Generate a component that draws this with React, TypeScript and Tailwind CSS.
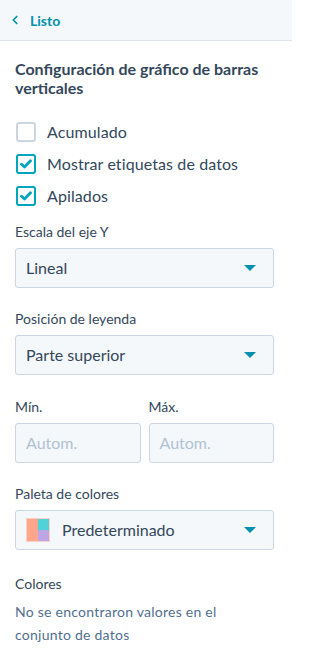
import { ChevronLeft } from "lucide-react";

function Caret() {
  return (
    <svg width="12" height="6" viewBox="0 0 12 6" className="shrink-0">
      <path d="M0 0 H12 L6 6 Z" fill="#0091ae" />
    </svg>
  );
}

function Checkbox({ checked, label }: { checked: boolean; label: string }) {
  return (
    <label className="flex items-center gap-[11px] h-[32px]">
      <span
        className={
          checked
            ? "flex items-center justify-center w-[20px] h-[20px] rounded-[3px] border-2 border-[#00a4bd] bg-white"
            : "flex items-center justify-center w-[20px] h-[20px] rounded-[3px] border-2 border-[#cbd6e2] bg-white"
        }
      >
        {checked && (
          <svg width="12" height="10" viewBox="0 0 12 10">
            <path d="M1.5 5.2 L4.5 8 L10.5 1.8" stroke="#00a4bd" strokeWidth="2.8" fill="none" strokeLinecap="round" strokeLinejoin="round" />
          </svg>
        )}
      </span>
      <span className="text-[16px] tracking-[0.1px] text-[#33475b]">{label}</span>
    </label>
  );
}

function Select({ children }: { children: React.ReactNode }) {
  return (
    <div className="flex items-center justify-between h-[40px] px-[10px] pr-[17px] rounded-[3px] border border-[#cbd6e2] bg-[#f5f8fa] text-[16px] text-[#33475b]">
      <div className="flex items-center">{children}</div>
      <Caret />
    </div>
  );
}

function FieldLabel({ children }: { children: React.ReactNode }) {
  return <div className="text-[14px] text-[#33475b] leading-[20px] mb-[6px]">{children}</div>;
}

export default function App() {
  return (
    <div className="w-[292px] min-h-[662px] bg-white" style={{ fontFamily: "Lato, 'Noto Sans', sans-serif" }}>
      <div className="flex items-center h-[41px] bg-[#f5f8fa] border-b border-[#dfe3eb] pl-[8px]">
        <ChevronLeft className="w-[14px] h-[14px] text-[#0091ae]" strokeWidth={3} />
        <span className="ml-[8px] text-[14px] font-bold text-[#0091ae]">Listo</span>
      </div>

      <div className="px-[15px] pt-[18px] pr-[18px]">
        <h2 className="text-[16px] font-bold leading-[19px] text-[#33475b]">
          Configuración de gráfico de barras verticales
        </h2>

        <div className="mt-[19px] flex flex-col pl-[1px]">
          <Checkbox checked={false} label="Acumulado" />
          <Checkbox checked label="Mostrar etiquetas de datos" />
          <Checkbox checked label="Apilados" />
        </div>

        <div className="mt-[10px]">
          <FieldLabel>Escala del eje Y</FieldLabel>
          <Select>Lineal</Select>
        </div>

        <div className="mt-[21px]">
          <FieldLabel>Posición de leyenda</FieldLabel>
          <Select>Parte superior</Select>
        </div>

        <div className="mt-[22px] grid grid-cols-2 gap-[8px]">
          <div>
            <FieldLabel>Mín.</FieldLabel>
            <div className="flex items-center h-[40px] px-[10px] rounded-[3px] border border-[#cbd6e2] bg-[#f5f8fa] text-[16px] text-[#b0c1d4]">
              Autom.
            </div>
          </div>
          <div>
            <FieldLabel>Máx.</FieldLabel>
            <div className="flex items-center h-[40px] px-[10px] rounded-[3px] border border-[#cbd6e2] bg-[#f5f8fa] text-[16px] text-[#b0c1d4]">
              Autom.
            </div>
          </div>
        </div>

        <div className="mt-[21px]">
          <FieldLabel>Paleta de colores</FieldLabel>
          <Select>
            <span className="grid grid-cols-2 grid-rows-2 w-[24px] h-[24px] border border-[#fbd0c4] mr-[12px]">
              <span className="row-span-2 bg-[#ffa58c]" />
              <span className="bg-[#4fd3d9]" />
              <span className="bg-[#bea6e6]" />
            </span>
            Predeterminado
          </Select>
        </div>

        <div className="mt-[24px]">
          <FieldLabel>Colores</FieldLabel>
          <p className="text-[14px] tracking-[0.25px] leading-[23px] text-[#516f90]">
            No se encontraron valores en el conjunto de datos
          </p>
        </div>
      </div>
    </div>
  );
}
